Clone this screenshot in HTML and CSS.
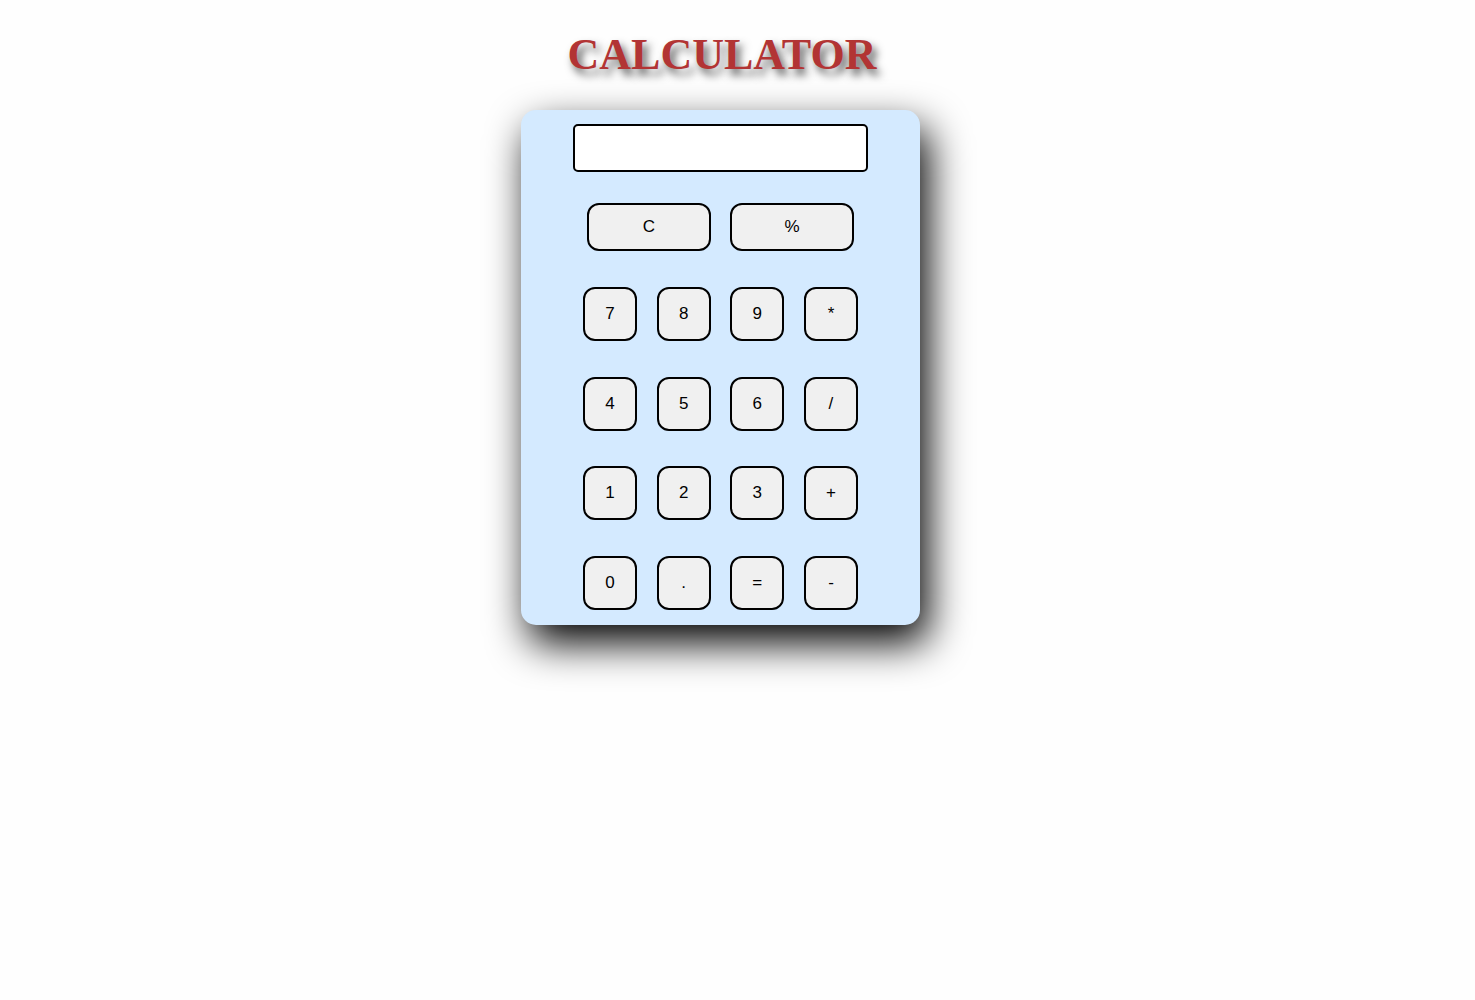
FILE: index.html
```html
<!DOCTYPE html>
<html>
<head>
<meta charset="utf-8">
<title>Calculator</title>
<link rel="stylesheet" href="styles.css">
</head>
<body>
<div class="page">
  <h1 class="title">CALCULATOR</h1>
  <div class="calc">
    <input class="display" type="text">
    <div class="top-row">
      <button class="key wide">C</button>
      <button class="key wide">%</button>
    </div>
    <div class="keys">
      <button class="key">7</button>
      <button class="key">8</button>
      <button class="key">9</button>
      <button class="key">*</button>
      <button class="key">4</button>
      <button class="key">5</button>
      <button class="key">6</button>
      <button class="key">/</button>
      <button class="key">1</button>
      <button class="key">2</button>
      <button class="key">3</button>
      <button class="key">+</button>
      <button class="key">0</button>
      <button class="key">.</button>
      <button class="key">=</button>
      <button class="key">-</button>
    </div>
  </div>
</div>
</body>
</html>
```

FILE: styles.css
```css
html, body {
  margin: 0;
  padding: 0;
  background: #fefefe;
}

.page {
  width: 1441px;
  display: flex;
  flex-direction: column;
  align-items: center;
  padding-top: 31px;
  padding-bottom: 120px;
}

.title {
  margin: 0 0 31px 0;
  font-family: "Liberation Serif", "Times New Roman", serif;
  font-weight: bold;
  font-size: 44px;
  line-height: 48px;
  color: #b23434;
  text-shadow: 4px 6px 8px #555;
  padding-left: 3px;
}

.calc {
  width: 399px;
  height: 515px;
  box-sizing: border-box;
  background: #d4eaff;
  border-radius: 15px;
  box-shadow: 8px 18px 40px #000;
  padding-top: 14px;
  display: flex;
  flex-direction: column;
  align-items: center;
}

.display {
  width: 295px;
  height: 48px;
  box-sizing: border-box;
  border: 2px solid #000;
  border-radius: 5px;
  background: #fff;
  margin: 0;
  padding: 0 8px;
  font-family: "Liberation Sans", Arial, sans-serif;
  font-size: 18px;
}

.top-row {
  display: flex;
  gap: 19px;
  margin-top: 31px;
}

.keys {
  display: grid;
  grid-template-columns: repeat(4, 54px);
  grid-auto-rows: 54px;
  column-gap: 19.67px;
  row-gap: 35.5px;
  margin-top: 36px;
}

.key {
  width: 54px;
  height: 54px;
  box-sizing: border-box;
  border: 2px solid #000;
  border-radius: 12px;
  background: #f0f0f0;
  color: #000;
  font-family: "Liberation Sans", Arial, sans-serif;
  font-size: 17px;
  padding: 0;
  margin: 0;
}

.key.wide {
  width: 124px;
  height: 48px;
}
```
